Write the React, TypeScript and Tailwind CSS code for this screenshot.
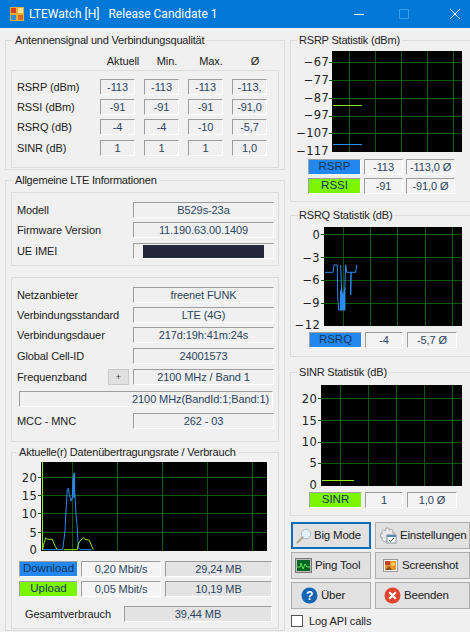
import React from "react";

const pts = (ox: number, oy: number, list: number[][]) =>
  list.map(([x, y]) => `${(ox + x / 3).toFixed(1)},${(oy + y / 3).toFixed(1)}`).join(" ");

const BLUE = "#2a8cf0";
const LIME = "#8fe81a";
const GRID = "#0d5a0d";

type ChartProps = {
  x0: number; y0: number; w: number; h: number;
  px: number; py: number; pw: number; ph: number;
  hs: number[]; vs: number[];
  labels: [string, number][];
  labelX: number;
  children?: React.ReactNode;
};

function Chart({ x0, y0, w, h, px, py, pw, ph, hs, vs, labels, labelX, children }: ChartProps) {
  return (
    <svg width={w} height={h} viewBox={`${x0} ${y0} ${w} ${h}`} className="block overflow-visible">
      <rect x={px} y={py} width={pw} height={ph} fill="#000" />
      {hs.map((y) => (
        <line key={"h" + y} x1={px - 3} x2={px + pw} y1={y + 0.5} y2={y + 0.5} stroke={GRID} />
      ))}
      {vs.map((x) => (
        <line key={"v" + x} x1={x + 0.5} x2={x + 0.5} y1={py} y2={py + ph} stroke={GRID} />
      ))}
      {labels.map(([t, y]) => (
        <text key={t} x={labelX} y={y + 4.5} textAnchor="end" fontSize="11.5" letterSpacing="0.3" fill="#222" fontFamily="'DejaVu Sans', sans-serif">
          {t}
        </text>
      ))}
      {children}
    </svg>
  );
}

function Field({ children, className = "" }: { children?: React.ReactNode; className?: string }) {
  return (
    <div className={"h-[16px] flex items-center justify-center border border-t-[#9d9d9d] border-l-[#9d9d9d] border-r-white border-b-white text-[11px] tracking-[-0.1px] leading-none text-[#2c4560] whitespace-nowrap overflow-hidden " + className}>
      {children}
    </div>
  );
}

function Legend({ children, className = "" }: { children: React.ReactNode; className?: string }) {
  return <div className={"h-[16px] flex items-center justify-center border border-t-[#a0a0a0] border-l-[#a0a0a0] border-r-white border-b-white text-[11.5px] leading-none text-[#17365d] " + className}>{children}</div>;
}

function Group({ title, className = "", legendClass = "ml-[6px]", children }: { title: string; className?: string; legendClass?: string; children: React.ReactNode }) {
  return (
    <fieldset className={"border border-[#dcdcdc] min-w-0 " + className}>
      <legend className={"h-[14px] px-[2px] text-[11px] tracking-[-0.2px] leading-[14px] text-[#222] whitespace-nowrap " + legendClass}>{title}</legend>
      {children}
    </fieldset>
  );
}

const labelCls = "text-[11px] tracking-[-0.1px] leading-none text-[#222]";

function Row({ label, vals, className = "" }: { label: string; vals: string[]; className?: string }) {
  return (
    <div className={"flex items-center " + className}>
      <div className={"w-[88px] pl-[5px] " + labelCls}>{label}</div>
      <div className="flex gap-[9px]">
        {vals.map((v, i) => (
          <Field key={i} className="w-[35px]">{v}</Field>
        ))}
      </div>
    </div>
  );
}

function Info({ label, className = "", children }: { label: string; className?: string; children: React.ReactNode }) {
  return (
    <div className={"flex items-center " + className}>
      <div className={"w-[121px] pl-[5px] " + labelCls}>{label}</div>
      <Field className="w-[141px]">{children}</Field>
    </div>
  );
}

function Btn({ children, className = "", focus = false, icon }: { children: React.ReactNode; className?: string; focus?: boolean; icon: React.ReactNode }) {
  return (
    <div className={"flex items-center bg-[#e1e1e1] text-[11.5px] tracking-[-0.2px] leading-none text-[#222] " + (focus ? "border-2 border-[#0f6cb8] " : "border border-[#adadad] ") + className}>
      {icon}
      <span>{children}</span>
    </div>
  );
}

const Magnifier = () => (
  <svg width="16" height="16" viewBox="0 0 16 16">
    <circle cx="10" cy="6" r="4.8" fill="#e4eef7" stroke="#a9bdd2" />
    <path d="M6.5 9.5 1.5 14.5" stroke="#b0aa90" strokeWidth="2.2" strokeLinecap="round" />
  </svg>
);
const Gear = () => (
  <svg width="19" height="18" viewBox="0 0 19 18">
    <path d="M7 1h3l.5 2 2-.8 1.8 1.8-1 1.7 2.2.6v2.4H8v6H5l-.8-1.2-1.6-1 1-1.8-2.2-.6v-3l2.2-.6-1-1.7 1.9-1.8 2 .8z" fill="#e8e8e8" stroke="#a5a5a5" />
    <rect x="8" y="8" width="9" height="8" fill="#fff" stroke="#7f95ad" />
    <rect x="8" y="8" width="9" height="2" fill="#5f86b5" />
    <path d="m10 13 1.5 1.5L15 11" stroke="#3d7f3d" fill="none" />
  </svg>
);
const Ping = () => (
  <svg width="17" height="15" viewBox="0 0 17 15">
    <rect x="0.5" y="0.5" width="16" height="14" fill="#bdbdbd" stroke="#777" />
    <rect x="2" y="2" width="13" height="11" fill="#062" />
    <path d="M2 9h3l1-4 2 6 2-5 2 3h3" stroke="#5fe05f" fill="none" />
  </svg>
);
const Shot = () => (
  <svg width="15" height="13" viewBox="0 0 15 13">
    <rect x="0.5" y="0.5" width="14" height="12" fill="#fff" stroke="#999" />
    <rect x="2" y="2" width="11" height="9" fill="#e8922e" />
    <rect x="2" y="2" width="5" height="4" fill="#c9402a" />
    <circle cx="10" cy="5" r="2" fill="#f6d860" />
    <path d="M2 11 6 7l3 4z" fill="#8a4a1a" />
  </svg>
);
const Help = () => (
  <svg width="17" height="17" viewBox="0 0 17 17">
    <circle cx="8.5" cy="8.5" r="8" fill="#1466b5" />
    <text x="8.5" y="13" textAnchor="middle" fontSize="12" fontWeight="700" fill="#fff" fontFamily="'Liberation Sans', sans-serif">?</text>
  </svg>
);
const Quit = () => (
  <svg width="17" height="17" viewBox="0 0 17 17">
    <circle cx="8.5" cy="8.5" r="8" fill="#e2452d" />
    <path d="m5.3 5.3 6.4 6.4M11.7 5.3l-6.4 6.4" stroke="#fff" strokeWidth="2.2" />
  </svg>
);

export default function App() {
  return (
    <div className="w-[470px] h-[632px] bg-[#f0f0f0] overflow-hidden flex flex-col font-['Liberation_Sans',sans-serif]">
      <div className="h-[28px] bg-[#0078d7] flex items-center shrink-0 relative">
        <svg width="14" height="14" viewBox="0 0 14 14" className="ml-[10px]">
          <rect width="14" height="14" fill="#e8b030" />
          <rect x="1" y="1" width="5" height="5" fill="#d8402a" />
          <rect x="8" y="1" width="5" height="5" fill="#f4e2a0" />
          <rect x="1" y="8" width="5" height="5" fill="#3a8ad8" />
          <rect x="8" y="8" width="5" height="5" fill="#d86a2a" />
        </svg>
        <span className="ml-[5px] text-[12px] text-white whitespace-pre font-['Roboto',sans-serif]">LTEWatch [H]   Release Candidate 1</span>
        <div className="ml-auto flex items-center">
          <div className="w-[10px] h-px bg-white mr-[35px]" />
          <div className="w-[10px] h-[10px] border border-[#3d9ae5] mr-[41px]" />
          <svg width="10" height="10" viewBox="0 0 10 10" className="mr-[10px]">
            <path d="m0 0 10 10M10 0 0 10" stroke="#fff" />
          </svg>
        </div>
      </div>

      <div className="flex pl-[5px] pt-[5px] gap-[5px]">
        {/* Left */}
        <div className="w-[280px] shrink-0 flex flex-col">
          <Group title="Antennensignal und Verbindungsqualität" legendClass="ml-[2px]" className="h-[137px] px-[5px]">
            <div className={"flex h-[14px] mt-[7px] " + labelCls + " !leading-[14px]"}>
              <div className="w-[90px]" />
              <div className="w-[44px] text-center">Aktuell</div>
              <div className="w-[44px] text-center">Min.</div>
              <div className="w-[44px] text-center">Max.</div>
              <div className="w-[44px] text-center">Ø</div>
            </div>
            <div className="mt-[2px] h-[98px] border border-[#dcdcdc] pt-[8px] flex flex-col">
              <Row label="RSRP (dBm)" vals={["-113", "-113", "-113", "-113,"]} />
              <Row label="RSSI (dBm)" vals={["-91", "-91", "-91", "-91,0"]} className="mt-[4px]" />
              <Row label="RSRQ (dB)" vals={["-4", "-4", "-10", "-5,7"]} className="mt-[4px]" />
              <Row label="SINR (dB)" vals={["1", "1", "1", "1,0"]} className="mt-[5px]" />
            </div>
          </Group>

          <Group title="Allgemeine LTE Informationen" legendClass="ml-[2px]" className="mt-[3px] h-[458px] px-[5px]">
            <div className="mt-[5px] h-[74px] border border-[#dcdcdc] pt-[9px] flex flex-col">
              <Info label="Modell">B529s-23a</Info>
              <Info label="Firmware Version" className="mt-[4px]">11.190.63.00.1409</Info>
              <Info label="UE IMEI" className="mt-[5px]">
                <div className="w-[121px] h-[13px] bg-[#23283b]" />
              </Info>
            </div>
            <div className="mt-[11px] h-[165px] border border-[#dcdcdc] pt-[9px] flex flex-col">
              <Info label="Netzanbieter">freenet FUNK</Info>
              <Info label="Verbindungsstandard" className="mt-[4px]">LTE (4G)</Info>
              <Info label="Verbindungsdauer" className="mt-[4px]">217d:19h:41m:24s</Info>
              <Info label="Global Cell-ID" className="mt-[5px]">24001573</Info>
              <div className="flex items-center mt-[5px]">
                <div className={"w-[96px] pl-[5px] " + labelCls}>Frequenzband</div>
                <div className="w-[21px] h-[16px] mr-[4px] bg-[#e1e1e1] border border-[#c8c8c8] flex items-center justify-center text-[9px] leading-none text-[#444]">+</div>
                <Field className="w-[141px]">2100 MHz / Band 1</Field>
              </div>
              <Field className="mt-[6px] ml-[7px] w-[254px] !justify-end pr-[3px]">2100 MHz(BandId:1;Band:1)</Field>
              <Info label="MCC - MNC" className="mt-[6px]">262 - 03</Info>
            </div>
            <Group title="Aktuelle(r) Datenübertragungsrate / Verbrauch" legendClass="ml-[5px]" className="mt-[3px] h-[184px]">
              <Chart x0={12} y0={458} w={258} h={94} px={41} py={461} pw={226} ph={89}
                hs={[476, 494, 512, 531]} vs={[72, 117, 162, 207, 252]}
                labels={[["20", 476], ["15", 494], ["10", 512], ["5", 531], ["0", 548]]} labelX={37}>
                <line x1="42.5" x2="42.5" y1="461" y2="549" stroke={LIME} />
                <polyline fill="none" stroke={BLUE} points={pts(0, 450, [[128, 296], [170, 296], [188, 296], [195, 240], [198, 180], [202, 115], [205, 112], [208, 130], [213, 150], [217, 140], [220, 75], [223, 65], [224, 120], [228, 190], [232, 230], [235, 290], [240, 296], [275, 296]])} />
                <polyline fill="none" stroke={BLUE} points={pts(0, 450, [[218, 140], [220, 80], [222, 140], [224, 70]])} />
                <polyline fill="none" stroke={LIME} points={pts(0, 450, [[128, 296], [130, 285], [137, 260], [143, 265], [157, 265], [165, 285], [172, 296]])} />
                <polyline fill="none" stroke={LIME} points={pts(0, 450, [[192, 296], [232, 296], [235, 280], [240, 270], [250, 260], [255, 265], [268, 268], [275, 285], [280, 296]])} />
              </Chart>
              <div className="flex mt-[8px] ml-[7px] gap-[3px]">
                <Legend className="w-[59px] bg-[#2288f0]">Download</Legend>
                <Field className="w-[80px] bg-[#f4f4f4]">0,20 Mbit/s</Field>
                <Field className="w-[107px] ml-px bg-[#e3e3e3]">29,24 MB</Field>
              </div>
              <div className="flex mt-[4px] ml-[7px] gap-[3px]">
                <Legend className="w-[59px] bg-[#7cf500]">Upload</Legend>
                <Field className="w-[80px] bg-[#f4f4f4]">0,05 Mbit/s</Field>
                <Field className="w-[107px] ml-px bg-[#e3e3e3]">10,19 MB</Field>
              </div>
              <div className="flex items-center mt-[9px]">
                <div className={"w-[112px] pl-[13px] " + labelCls}>Gesamtverbrauch</div>
                <Field className="w-[148px] bg-[#e3e3e3]">39,44 MB</Field>
              </div>
            </Group>
          </Group>
        </div>

        {/* Right */}
        <div className="w-[185px] shrink-0 flex flex-col">
          <Group title="RSRP Statistik (dBm)" className="h-[169px]">
            <Chart x0={291} y0={47} w={175} h={110} px={332} py={51} pw={130} ph={101}
              hs={[62, 80, 98, 116, 133]} vs={[349, 375, 401, 427, 453]}
              labels={[["−67", 61], ["−77", 79], ["−87", 97], ["−97", 114], ["−107", 132], ["−117", 150]]} labelX={329}>
              <line x1="333" x2="362" y1="105.5" y2="105.5" stroke={LIME} />
              <line x1="333" x2="362" y1="144.5" y2="144.5" stroke={BLUE} />
            </Chart>
            <div className="flex mt-[2px] ml-[17px] gap-[3px]">
              <Legend className="w-[53px] bg-[#2288f0]">RSRP</Legend>
              <Field className="w-[39px] bg-[#f3f3f3]">-113</Field>
              <Field className="w-[49px] bg-[#f3f3f3]">-113,0 Ø</Field>
            </div>
            <div className="flex mt-[3px] ml-[17px] gap-[3px]">
              <Legend className="w-[53px] bg-[#7cf500]">RSSI</Legend>
              <Field className="w-[39px] bg-[#f3f3f3]">-91</Field>
              <Field className="w-[49px] bg-[#f3f3f3]">-91,0 Ø</Field>
            </div>
          </Group>

          <Group title="RSRQ Statistik (dB)" className="mt-[6px] h-[149px]">
            <Chart x0={291} y0={222} w={175} h={110} px={324} py={227} pw={138} ph={99}
              hs={[234, 257, 280, 303]} vs={[343, 370, 397, 425, 452]}
              labels={[["0", 234], ["−3", 257], ["−6", 279], ["−9", 302], ["−12", 324]]} labelX={320}>
              <polyline fill="none" stroke={BLUE} points={pts(325, 255, [[0, 52], [24, 52], [27, 30], [37, 30], [38, 125], [41, 165], [60, 165], [60, 80], [62, 30], [65, 52], [78, 52], [77, 120], [78, 52], [92, 52], [95, 30]])} />
              <polyline fill="none" stroke={BLUE} points={pts(325, 255, [[47, 30], [50, 120], [50, 165]])} />
              <polygon fill={BLUE} points={pts(325, 255, [[45, 110], [50, 90], [54, 120], [60, 90], [60, 165], [45, 165]])} />
            </Chart>
            <div className="flex ml-[18px] gap-[3px]">
              <Legend className="w-[53px] bg-[#2288f0]">RSRQ</Legend>
              <Field className="w-[38px] bg-[#f3f3f3]">-4</Field>
              <Field className="w-[50px] ml-px bg-[#f3f3f3]">-5,7 Ø</Field>
            </div>
          </Group>

          <Group title="SINR Statistik (dB)" className="mt-[8px] h-[151px]">
            <Chart x0={291} y0={379} w={175} h={110} px={321} py={385} pw={141} ph={101}
              hs={[398, 420, 442, 463]} vs={[340, 368, 396, 424, 452]}
              labels={[["20", 398], ["15", 420], ["10", 441], ["5", 462], ["0", 484]]} labelX={317}>
              <line x1="322" x2="354" y1="480.5" y2="480.5" stroke={LIME} />
            </Chart>
            <div className="flex mt-[3px] ml-[18px] gap-[3px]">
              <Legend className="w-[53px] bg-[#7cf500]">SINR</Legend>
              <Field className="w-[38px] bg-[#f3f3f3]">1</Field>
              <Field className="w-[50px] ml-px bg-[#f3f3f3]">1,0 Ø</Field>
            </div>
          </Group>

          <div className="mt-[6px] ml-px grid grid-cols-[80px_95px] gap-x-[4px] gap-y-[3px] grid-rows-[27px_27px_27px]">
            <Btn focus icon={<Magnifier />} className="pl-[3px] gap-[2px]">Big Mode</Btn>
            <Btn icon={<Gear />} className="pl-[3px] gap-[2px]">Einstellungen</Btn>
            <Btn icon={<Ping />} className="pl-[3px] gap-[3px]">Ping Tool</Btn>
            <Btn icon={<Shot />} className="pl-[7px] gap-[4px]">Screenshot</Btn>
            <Btn icon={<Help />} className="pl-[9px] gap-[3px]">Über</Btn>
            <Btn icon={<Quit />} className="pl-[8px] gap-[3px]">Beenden</Btn>
          </div>
          <div className="ml-px mt-[6px] flex items-center gap-[6px]">
            <div className="w-[12px] h-[12px] bg-white border border-[#555]" />
            <span className={labelCls}>Log API calls</span>
          </div>
        </div>
      </div>
    </div>
  );
}
